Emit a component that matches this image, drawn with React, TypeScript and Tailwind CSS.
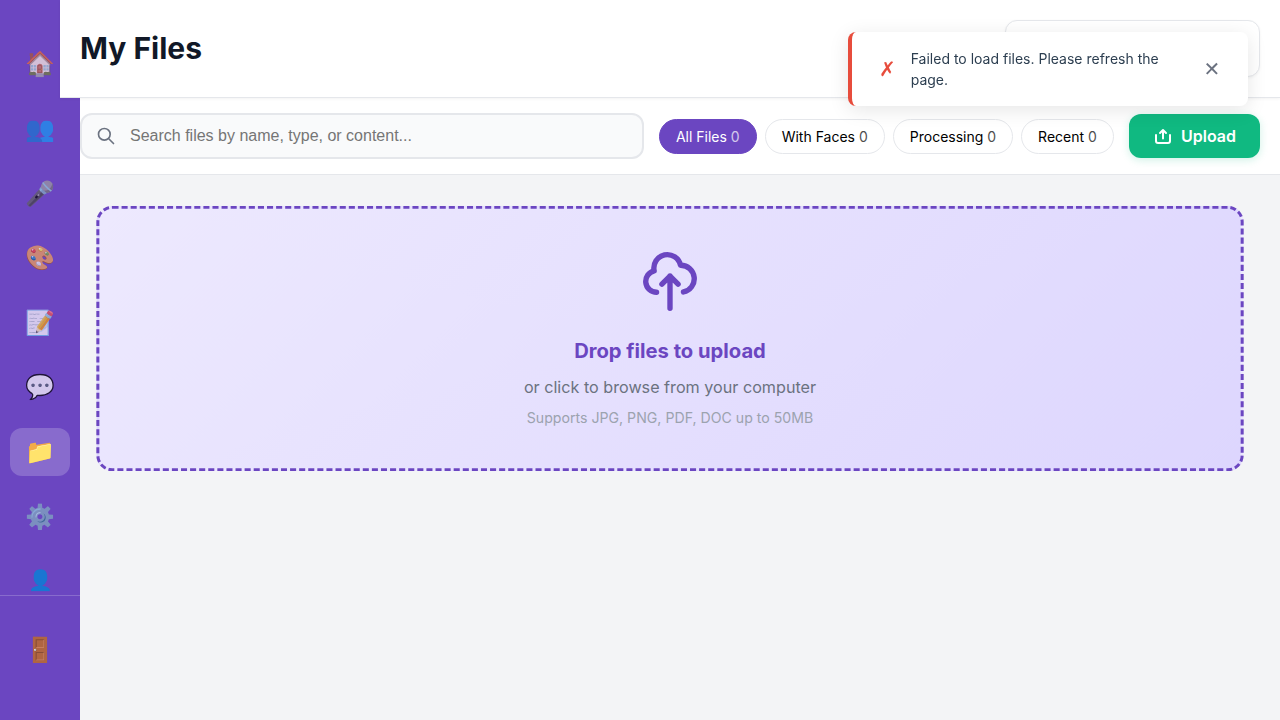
import React from "react";

const navItems = [
  { icon: "🏠", label: "Home" },
  { icon: "👥", label: "People" },
  { icon: "🎤", label: "Voice" },
  { icon: "🎨", label: "Art" },
  { icon: "📝", label: "Notes" },
  { icon: "💬", label: "Chat" },
  { icon: "📁", label: "Files", active: true },
  { icon: "⚙️", label: "Settings" },
];

const filters = [
  { label: "All Files", active: true },
  { label: "With Faces" },
  { label: "Processing" },
  { label: "Recent" },
];

function Sidebar() {
  return (
    <aside className="flex h-full w-20 shrink-0 flex-col bg-[#6b46c1]">
      <nav className="flex h-[595px] flex-col items-center gap-[16.6px] pt-[40.4px]">
        {navItems.map((item) => (
          <a
            key={item.label}
            aria-label={item.label}
            className={
              item.active
                ? "flex h-12 w-[60px] shrink-0 items-center justify-center rounded-xl bg-white/20 text-2xl"
                : "flex h-12 w-[60px] shrink-0 items-center justify-center rounded-xl text-2xl opacity-70"
            }
          >
            {item.icon}
          </a>
        ))}
        <a aria-label="Profile" className="flex h-[46px] w-[60px] shrink-0 items-center justify-center text-xl">
          👤
        </a>
      </nav>
      <div className="flex flex-1 flex-col items-center border-t border-white/20 pt-[30px]">
        <a aria-label="Log out" className="flex h-12 w-[60px] items-center justify-center text-2xl">
          🚪
        </a>
      </div>
    </aside>
  );
}

function Toolbar() {
  return (
    <div className="flex h-[77px] items-center border-b border-[#e5e7eb] bg-white pr-5">
      <div className="flex h-[46px] w-[564px] items-center gap-[14px] rounded-xl border-2 border-[#e5e7eb] bg-[#f9fafb] pl-[14px]">
        <svg className="h-5 w-5 text-[#6b7280]" viewBox="0 0 24 24" fill="none" stroke="currentColor" strokeWidth="2" strokeLinecap="round" strokeLinejoin="round">
          <path d="M21 21l-6-6m2-5a7 7 0 11-14 0 7 7 0 0114 0z" />
        </svg>
        <input
          className="min-w-0 flex-1 bg-transparent font-['Liberation_Sans',sans-serif] text-base leading-normal outline-none placeholder:text-[#757575]"
          placeholder="Search files by name, type, or content..."
        />
      </div>
      <div className="ml-[14.9px] flex gap-2">
        {filters.map((f) => (
          <button
            key={f.label}
            className={
              f.active
                ? "h-[35px] rounded-full border border-[#6b46c1] bg-[#6b46c1] px-4 pt-0.5 text-sm whitespace-nowrap text-white"
                : "h-[35px] rounded-full border border-[#e5e7eb] bg-white px-4 pt-0.5 text-sm whitespace-nowrap text-black"
            }
          >
            {f.label} <span className="opacity-70">0</span>
          </button>
        ))}
      </div>
      <button className="ml-auto flex h-11 w-[131px] items-center justify-center gap-2 rounded-xl bg-[#10b981] text-base font-semibold text-white shadow-[0_2px_8px_rgba(16,185,129,0.2)]">
        <svg className="h-5 w-5" viewBox="0 0 20 20" fill="none" stroke="currentColor" strokeWidth="2" strokeLinecap="round" strokeLinejoin="round">
          <path d="M3 9v6a2 2 0 002 2h10a2 2 0 002-2V9M7 7l3-3 3 3M10 4v8.5" />
        </svg>
        Upload
      </button>
    </div>
  );
}

function DropZone() {
  return (
    <section className="mt-8 mr-[42px] ml-[22px] flex h-[263px] scale-[1.01] flex-col items-center rounded-2xl border-[3px] border-dashed border-[#6b46c1] bg-[linear-gradient(135deg,#ede9fe_0%,#ddd6fe_100%)] pt-10">
      <svg className="h-16 w-16 text-[#6b46c1]" viewBox="0 0 24 24" fill="none" stroke="currentColor" strokeWidth="2" strokeLinecap="round" strokeLinejoin="round">
        <path d="M7 16a4 4 0 01-.88-7.903A5 5 0 1115.9 6L16 6a5 5 0 011 9.9M15 13l-3-3m0 0l-3 3m3-3v12" />
      </svg>
      <h2 className="mt-6 text-xl leading-[26px] font-bold text-[#6b46c1]">Drop files to upload</h2>
      <p className="mt-2.5 text-base leading-6 text-[#6b7280]">or click to browse from your computer</p>
      <p className="mt-2 text-sm leading-[21px] text-[#9ca3af]">Supports JPG, PNG, PDF, DOC up to 50MB</p>
    </section>
  );
}

function Toast() {
  return (
    <div role="alert" className="absolute top-8 right-8 z-20 flex h-[74px] w-[400px] items-center rounded-lg border-l-4 border-[#e74c3c] bg-white shadow-[0_4px_20px_rgba(0,0,0,0.1)] will-change-transform">
      <span className="ml-[24.5px] w-[22px] text-center font-['DejaVu_Sans',sans-serif] text-xl leading-5 font-bold text-[#e74c3c]">✗</span>
      <p className="ml-[12.2px] w-[270.3px] text-sm leading-[21px] text-[#2c3e50]">Failed to load files. Please refresh the page.</p>
      <button aria-label="Dismiss" className="ml-[19px] w-6 text-center font-['DejaVu_Sans',sans-serif] text-xl leading-5 text-[#6b7280]">✕</button>
    </div>
  );
}

export default function App() {
  return (
    <div className="relative flex h-[720px] w-[1280px] overflow-hidden bg-[#f3f4f6] font-['Inter',sans-serif]">
      <Sidebar />
      <main className="flex min-w-0 flex-1 flex-col">
        <header className="relative z-10 -ml-5 flex h-[98px] shrink-0 items-center justify-between border-b border-[#e5e7eb] bg-white px-5 shadow-[0_1px_3px_rgba(0,0,0,0.05)]">
          <h1 className="pb-0.5 text-3xl leading-10 font-bold text-[#111827]">My Files</h1>
          <div className="h-[57px] w-[255px] rounded-xl border border-[#e5e7eb] bg-white shadow-[0_1px_3px_rgba(0,0,0,0.05)]" />
        </header>
        <Toolbar />
        <DropZone />
      </main>
      <Toast />
    </div>
  );
}
